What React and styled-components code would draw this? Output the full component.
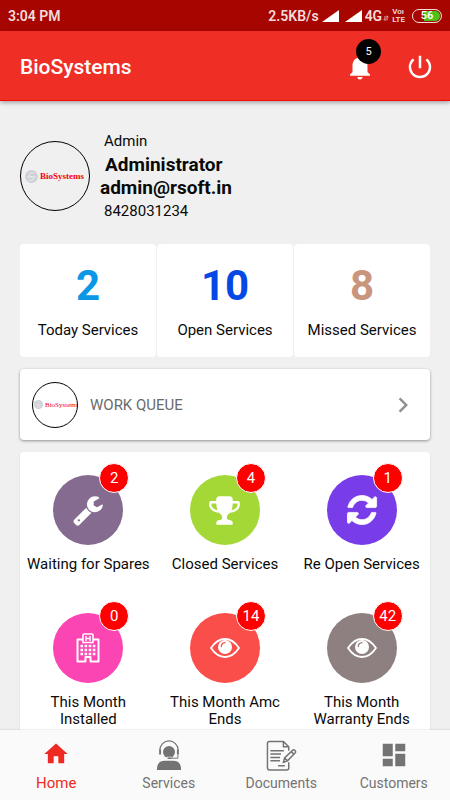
import React from 'react';
import styled, { createGlobalStyle } from 'styled-components';
import {
  MdNotifications,
  MdPowerSettingsNew,
  MdChevronRight,
  MdHome,
  MdDashboard,
} from 'react-icons/md';

const GlobalStyle = createGlobalStyle`
* { box-sizing: border-box; }
body {
  margin: 0;
  background: #f0f0f0;
  color: #0a0a0a;
  font-family: Roboto, "Liberation Sans", sans-serif;
}
button {
  font: inherit;
  color: inherit;
  border: 0;
  padding: 0;
  background: none;
}
h1, h2, p { margin: 0; }
`;

const Screen = styled.div`
display: flex;
flex-direction: column;
height: 100vh;
`;

const StatusBar = styled.div`
display: flex;
align-items: center;
justify-content: space-between;
height: 31px;
padding: 0 8px;
background: #a60500;
color: #f3dcdb;
font-size: 14px;
font-weight: 600;
`;

const StatusItems = styled.div`
display: flex;
align-items: center;
gap: 3px;
`;

const Signals = styled.span`
display: flex;
gap: 6px;
`;

const Network = styled.span`
display: flex;
align-items: center;
gap: 1px;
svg { margin-top: 5px; }
`;

const Volte = styled.span`
display: flex;
flex-direction: column;
margin-right: 4px;
font-size: 8px;
line-height: 8px;
`;

const Battery = styled.span`
display: flex;
align-items: center;
justify-content: center;
width: 30px;
height: 14px;
border: 1px solid #f3dcdb;
border-radius: 7px;
box-shadow: inset 0 0 0 1px #a60500;
background: linear-gradient(to right, #a60500 40%, #4fc31c 40%);
color: #fff;
font-size: 11px;
line-height: 12px;
`;

const Header = styled.header`
display: flex;
align-items: center;
justify-content: space-between;
height: 70px;
flex-shrink: 0;
padding: 3px 15px 0 20px;
background: #ef2e26;
border-bottom: 1px solid #f50800;
box-shadow: 0 2px 4px rgba(0, 0, 0, 0.3);
color: #fff;
position: relative;
`;

const Title = styled.h1`
font-size: 21px;
font-weight: 500;
`;

const Actions = styled.div`
display: flex;
gap: 30px;
`;

const IconButton = styled.button`
position: relative;
display: flex;
`;

const BellBadge = styled.span`
position: absolute;
top: -13px;
right: -6px;
width: 25px;
height: 25px;
border-radius: 50%;
background: #000;
font-size: 11px;
line-height: 25px;
text-align: center;
`;

const Content = styled.main`
flex: 1;
min-height: 0;
overflow: auto;
scrollbar-width: none;
padding: 28px 20px 12px;
display: flex;
flex-direction: column;
gap: 12px;
`;

const Profile = styled.section`
display: flex;
align-items: center;
gap: 10px;
margin-bottom: 9px;
`;

const Avatar = styled.span`
display: flex;
align-items: center;
flex-shrink: 0;
width: ${({ $size }) => $size}px;
height: ${({ $size }) => $size}px;
border: 1px solid #000;
border-radius: 50%;
background: ${({ $bg }) => $bg || 'transparent'};
overflow: hidden;
padding-left: ${({ $inset }) => $inset}px;
gap: 2px;
color: #f5000c;
font-family: "Liberation Serif", serif;
font-size: ${({ $text }) => $text}px;
font-weight: ${({ $weight }) => $weight};
svg { flex-shrink: 0; }
`;

const ProfileText = styled.div`
display: flex;
flex-direction: column;
`;

const Small = styled.p`
padding-left: 4px;
font-size: 15px;
line-height: 24px;
`;

const Name = styled.h2`
padding-left: ${({ $indent }) => ($indent ? 5 : 0)}px;
font-size: 19px;
line-height: 23px;
font-weight: bold;
`;

const Stats = styled.section`
display: grid;
grid-template-columns: repeat(3, 1fr);
gap: 1px;
`;

const Stat = styled.div`
display: flex;
flex-direction: column;
align-items: center;
gap: 10px;
padding: 17px 0;
border-radius: 4px;
background: #fff;
font-size: 15px;
line-height: 19px;
`;

const StatValue = styled.span`
color: ${({ $color }) => $color};
font-size: 42px;
line-height: 50px;
font-weight: bold;
`;

const QueueCard = styled.button`
display: flex;
align-items: center;
gap: 12px;
width: 100%;
min-height: 71px;
flex-shrink: 0;
padding: 0 12px;
border-radius: 4px;
background: #fff;
box-shadow: 0 1px 3px rgba(0, 0, 0, 0.4);
`;

const QueueLabel = styled.span`
flex: 1;
text-align: left;
color: #6b6b6b;
font-size: 15px;
`;

const Tiles = styled.section`
display: grid;
grid-template-columns: repeat(3, 1fr);
align-items: start;
row-gap: 39px;
padding: 23px 0;
border-radius: 4px;
background: #fff;
box-shadow: 0 1px 2px rgba(0, 0, 0, 0.12);
`;

const Tile = styled.button`
display: flex;
flex-direction: column;
align-items: center;
gap: 11px;
`;

const Disc = styled.span`
--disc: ${({ $color }) => $color};
position: relative;
display: flex;
align-items: center;
justify-content: center;
width: 70px;
height: 70px;
border-radius: 50%;
background: var(--disc);
color: #fff;
`;

const Count = styled.span`
position: absolute;
top: -12px;
right: -6px;
width: 30px;
height: 30px;
border: 1px solid #fff;
border-radius: 50%;
background: #f00;
font-size: 15px;
line-height: 28px;
text-align: center;
`;

const TileLabel = styled.span`
max-width: 130px;
min-height: 18px;
font-size: 15px;
line-height: 17px;
`;

const BottomNav = styled.nav`
display: grid;
grid-template-columns: repeat(4, 1fr);
height: 70px;
flex-shrink: 0;
background: #fafafa;
box-shadow: 0 -1px 1px rgba(0, 0, 0, 0.06);
position: relative;
`;

const NavLink = styled.a`
display: flex;
flex-direction: column;
align-items: center;
justify-content: space-between;
padding: 10px 0 8px;
color: ${({ $active }) => ($active ? '#ee2a22' : '#737373')};
font-size: ${({ $active }) => ($active ? 15 : 14)}px;
line-height: 18px;
text-decoration: none;
`;

const Signal = () => (
  <svg width="17" height="12" viewBox="0 0 17 12" fill="#fff">
    <path d="M0 12 17 0V12z" />
  </svg>
);

const DataArrows = () => (
  <svg width="6" height="6" viewBox="0 0 6 6" fill="none" stroke="#f3dcdb" strokeWidth="0.8">
    <path d="M2 1v4.5M2 5.5.6 4M4 5.5V.8M4 .8l1.4 1.6" />
  </svg>
);

const Globe = ({ size }) => (
  <svg width={size} height={size} viewBox="0 0 14 14" fill="none">
    <circle cx="7" cy="7" r="7" fill="#cdd0d6" />
    <path d="M10 3.6C7.5 2 4 3.4 4.6 5.6S9.6 7 9.6 9.2 5.5 12 3.4 10.2M2 7.5h10" stroke="#eff0f2" strokeWidth="0.9" />
  </svg>
);

const BrandLogo = ({ size, inset, text, globe, bg, weight }) => (
  <Avatar $size={size} $inset={inset} $text={text} $bg={bg} $weight={weight}>
    <Globe size={globe} />
    BioSystems
  </Avatar>
);

const Wrench = () => (
  <svg width="32" height="32" viewBox="0 0 1792 1792" fill="currentColor">
    <path d="M448 1472q0-26-19-45t-45-19-45 19-19 45 19 45 45 19 45-19 19-45zm644-420l-682 682q-37 37-90 37-52 0-91-37l-106-108q-38-36-38-90 0-53 38-91l681-681q39 98 114.5 173.5t173.5 114.5zm634-435q0 39-23 106-47 134-164.5 217.5t-258.5 83.5q-185 0-316.5-131.5t-131.5-316.5 131.5-316.5 316.5-131.5q58 0 121.5 16.5t107.5 46.5q16 11 16 28t-16 28l-293 169v224l193 107q5-3 79-48.5t135.5-81 70.5-35.5q15 0 23.5 10t8.5 25z" />
  </svg>
);

const Trophy = () => (
  <svg width="33" height="33" viewBox="0 0 1792 1792" fill="currentColor">
    <path d="M522 883q-74-162-74-371h-256v96q0 78 94.5 162t235.5 113zm1078-275v-96h-256q0 209-74 371 141-29 235.5-113t94.5-162zm128-128v128q0 71-41.5 143t-112 130-173 97.5-215.5 44.5q-42 54-95 95-38 34-52.5 72.5t-14.5 89.5q0 54 30.5 91t97.5 37q75 0 133.5 45.5t58.5 114.5v64q0 14-9 23t-23 9h-832q-14 0-23-9t-9-23v-64q0-69 58.5-114.5t133.5-45.5q67 0 97.5-37t30.5-91q0-51-14.5-89.5t-52.5-72.5q-53-41-95-95-113-5-215.5-44.5t-173-97.5-112-130-41.5-143v-128q0-40 28-68t68-28h288v-96q0-66 47-113t113-47h576q66 0 113 47t47 113v96h288q40 0 68 28t28 68z" />
  </svg>
);

const Refresh = () => (
  <svg width="34" height="34" viewBox="0 0 1792 1792" fill="currentColor">
    <path stroke="currentColor" strokeWidth="40" d="M1639 1056q0 5-1 7-64 268-268 434.5t-478 166.5q-146 0-282.5-55t-243.5-157l-129 129q-19 19-45 19t-45-19-19-45v-448q0-26 19-45t45-19h448q26 0 45 19t19 45-19 45l-137 137q71 66 161 102t187 36q134 0 250-65t186-179q11-17 53-117 8-23 30-23h192q13 0 22.5 9.5t9.5 22.5zm25-800v448q0 26-19 45t-45 19h-448q-26 0-45-19t-19-45 19-45l138-138q-148-137-349-137-134 0-250 65t-186 179q-11 17-53 117-8 23-30 23h-199q-13 0-22.5-9.5t-9.5-22.5v-7q65-268 270-434.5t480-166.5q146 0 284 55.5t245 156.5l130-129q19-19 45-19t45 19 19 45z" />
  </svg>
);

const Hospital = () => (
  <svg width="24" height="30" viewBox="0 0 24 30" fill="none" stroke="currentColor">
    <path d="M7 6.500H1.500v22h8V24h5v4.500h8v-22H17" strokeWidth="2" strokeLinejoin="round" />
    <path d="M7 9.500V2q0-1 1-1h8q1 0 1 1v7.500z" strokeWidth="1.600" />
    <path d="M10 3v5M14 3v5M10 5.500h4" strokeWidth="1.500" />
    <path d="M4.500 13h15M4.500 17h15M4.500 21h15" strokeWidth="2.600" strokeDasharray="2.600 1.500" />
  </svg>
);

const Eye = () => (
  <svg width="30" height="20" viewBox="0 0 30 20" fill="none" stroke="currentColor">
    <path d="M1 10Q7 1 15 1T29 10Q23 19 15 19T1 10z" strokeWidth="1.8" strokeLinejoin="round" />
    <circle cx="15" cy="9" r="7" fill="currentColor" stroke="none" />
    <path d="M11.3 8.5Q11.5 5 15 4.6" stroke="var(--disc)" strokeWidth="1.3" strokeLinecap="round" />
  </svg>
);

const Agent = () => (
  <svg width="26" height="30" viewBox="0 0 26 31" fill="none" stroke="currentColor">
    <circle cx="13" cy="12.5" r="6.2" fill="currentColor" stroke="none" />
    <path d="M.5 31q0-9.500 8-9.500h9q8 0 8 9.500z" fill="currentColor" stroke="none" />
    <path d="M3.500 11C3.500 5 8 1 13 1S22.500 5 22.500 11" strokeWidth="1.3" />
    <path d="M3.800 10v5M22.200 10v5" strokeWidth="2" />
    <path d="M22.200 15v3.800H15" strokeWidth="1" />
    <path d="M10.500 18.800h5.500" stroke="#fafafa" strokeWidth="3" />
    <path d="M11.500 18.800h4.500" strokeWidth="1.600" />
  </svg>
);

const DocumentPen = () => (
  <svg width="32" height="31" viewBox="0 0 32 32" fill="none" stroke="currentColor" strokeWidth="1.500">
    <path d="M24 11V7l-5.500-5.500H4q-2 0-2 2v25q0 2.500 2 2.500h18q2 0 2-2v-6M18.500 1.500V7H24" />
    <path d="M5 11h14M5 14.500h11M5 18h10M5 21.500h10M13 26.500h7" />
    <path d="M18.500 23l1.200-4.500 8.500-8q1-.8 2.200.3t.3 2.400l-8 8.300zM26.500 12l2.800 2.800M19.700 18.500l3 3" />
  </svg>
);

const stats = [
  { value: 2, label: 'Today Services', color: '#0a97e6' },
  { value: 10, label: 'Open Services', color: '#0648e4' },
  { value: 8, label: 'Missed Services', color: '#c9967d' },
];

const tiles = [
  { count: 2, label: 'Waiting for Spares', color: '#866b90', icon: <Wrench /> },
  { count: 4, label: 'Closed Services', color: '#a4d837', icon: <Trophy /> },
  { count: 1, label: 'Re Open Services', color: '#783ce8', icon: <Refresh /> },
  { count: 0, label: 'This Month Installed', color: '#fb45b3', icon: <Hospital /> },
  { count: 14, label: 'This Month Amc Ends', color: '#f94e4a', icon: <Eye /> },
  { count: 42, label: 'This Month Warranty Ends', color: '#8e8080', icon: <Eye /> },
];

const App = () => {
  return (
    <Screen>
      <GlobalStyle />
      <StatusBar>
        <span>3:04 PM</span>
        <StatusItems>
          <span>2.5KB/s</span>
          <Signals>
            <Signal />
            <Signal />
          </Signals>
          <Network>4G<DataArrows /></Network>
          <Volte><span>Voı</span><span>LTE</span></Volte>
          <Battery>56</Battery>
        </StatusItems>
      </StatusBar>
      <Header>
        <Title>BioSystems</Title>
        <Actions>
          <IconButton aria-label="Notifications">
            <MdNotifications size={30} />
            <BellBadge>5</BellBadge>
          </IconButton>
          <IconButton aria-label="Log out">
            <MdPowerSettingsNew size={30} />
          </IconButton>
        </Actions>
      </Header>
      <Content>
        <Profile>
          <BrandLogo size={70} inset={4} text={9} globe={13} weight="bold" />
          <ProfileText>
            <Small>Admin</Small>
            <Name $indent>Administrator</Name>
            <Name as="p">admin@rsoft.in</Name>
            <Small>8428031234</Small>
          </ProfileText>
        </Profile>
        <Stats>
          {stats.map((s) => (
            <Stat key={s.label}>
              <StatValue $color={s.color}>{s.value}</StatValue>
              <span>{s.label}</span>
            </Stat>
          ))}
        </Stats>
        <QueueCard>
          <BrandLogo size={46} inset={1} text={7} globe={9} weight="normal" bg="#fff" />
          <QueueLabel>WORK QUEUE</QueueLabel>
          <MdChevronRight size={30} color="#919191" />
        </QueueCard>
        <Tiles>
          {tiles.map((t) => (
            <Tile key={t.label}>
              <Disc $color={t.color}>
                {t.icon}
                <Count>{t.count}</Count>
              </Disc>
              <TileLabel>{t.label}</TileLabel>
            </Tile>
          ))}
        </Tiles>
      </Content>
      <BottomNav>
        <NavLink href="#home" $active><MdHome size={28} />Home</NavLink>
        <NavLink href="#services"><Agent />Services</NavLink>
        <NavLink href="#documents"><DocumentPen />Documents</NavLink>
        <NavLink href="#customers"><MdDashboard size={30} />Customers</NavLink>
      </BottomNav>
    </Screen>
  );
};

export default App;
